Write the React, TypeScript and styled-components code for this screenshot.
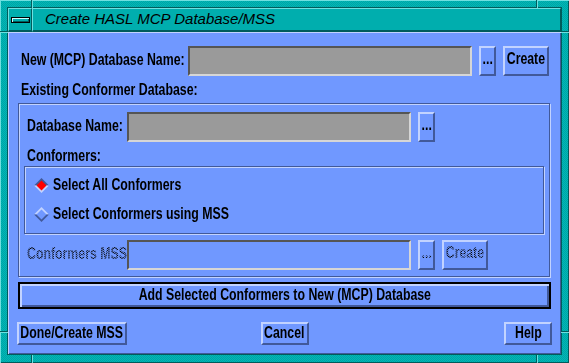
import React from 'react';
import styled, { createGlobalStyle, css } from 'styled-components';

const UI = `"Liberation Sans", Arial, sans-serif`;

const BLUE = '#7098ff';
const LIGHT = '#c2d3ff';
const DARK = '#41599a';
const TEAL = '#00aeae';
const TEAL_LIGHT = '#6ee0e0';
const TEAL_DARK = '#005c5c';

const Global = createGlobalStyle`
  html, body { margin: 0; padding: 0; width: 569px; height: 363px; overflow: hidden; background: ${TEAL}; }
  *, *::before, *::after { box-sizing: border-box; }
`;

const stipple = css`
  color: transparent;
  background-image: repeating-conic-gradient(#000 0% 25%, transparent 0% 50%);
  background-size: 2px 2px;
  -webkit-background-clip: text;
  background-clip: text;
`;

const Frame = styled.div`
  position: relative;
  width: 569px;
  height: 363px;
  padding: 8px 8px 9px 8px;
  display: flex;
  flex-direction: column;
  background-color: ${TEAL};
  background-image: repeating-conic-gradient(#00b8b8 0% 25%, #00a4a4 0% 50%);
  background-size: 2px 2px;
  box-shadow: inset 1px 1px 0 ${TEAL_LIGHT}, inset -1px -1px 0 ${TEAL_DARK};
`;

const Notch = styled.span<{ $x: number; $y: number; $v?: boolean }>`
  position: absolute;
  left: ${p => p.$x}px;
  top: ${p => p.$y}px;
  ${p =>
    p.$v
      ? css`
          width: 2px;
          height: 8px;
          border-left: 1px solid ${TEAL_DARK};
          border-right: 1px solid ${TEAL_LIGHT};
        `
      : css`
          width: 8px;
          height: 2px;
          border-top: 1px solid ${TEAL_DARK};
          border-bottom: 1px solid ${TEAL_LIGHT};
        `}
`;

const Window = styled.div`
  flex: 1;
  display: flex;
  flex-direction: column;
  box-shadow: 0 0 0 1px ${TEAL_DARK};
`;

const TitleBar = styled.div`
  flex: none;
  height: 24px;
  display: flex;
`;

const bevelTeal = css`
  background: ${TEAL};
  border-style: solid;
  border-width: 1px 1px 2px 1px;
  border-color: ${TEAL_LIGHT} ${TEAL_DARK} ${TEAL_DARK} ${TEAL_LIGHT};
`;

const MenuButton = styled.div`
  ${bevelTeal};
  width: 24px;
  height: 100%;
  display: flex;
  align-items: center;
  justify-content: center;
  padding-left: 1px;
`;

const MenuGlyph = styled.span`
  width: 19px;
  height: 6px;
  border: 1px solid #000;
  background: ${TEAL};
  box-shadow: inset 1px 1px 0 #c8ffff, inset -1px -1px 0 ${TEAL_DARK};
`;

const Title = styled.div`
  ${bevelTeal};
  flex: 1;
  height: 100%;
  display: flex;
  align-items: center;
  padding: 0 0 2px 12px;
  font: italic 15px "Liberation Sans", Arial, sans-serif;
  color: #000;
  white-space: nowrap;
`;

const Client = styled.div`
  flex: 1;
  display: flex;
  flex-direction: column;
  padding: 14px 10px 0 10px;
  background: ${BLUE};
  box-shadow: inset 1px 1px 0 ${LIGHT}, inset -1px -1px 0 ${DARK};
  font: bold 16px ${UI};
  color: #000;
`;

/* the dialog font is a narrow bold sans: Liberation Sans Bold squeezed horizontally */
const Narrow = styled.span<{ $origin?: 'left' | 'center'; $disabled?: boolean }>`
  display: inline-block;
  white-space: nowrap;
  transform: scaleX(0.77);
  transform-origin: ${p => p.$origin ?? 'left'} center;
  ${p => p.$disabled && stipple};
`;

const FieldRow = styled.div<{ $indent?: number; $top?: number }>`
  flex: none;
  display: flex;
  align-items: center;
  height: 30px;
  margin-top: ${p => p.$top ?? 0}px;
  padding-left: ${p => p.$indent ?? 0}px;
`;

const Label = styled.span<{ $width: number }>`
  flex: none;
  width: ${p => p.$width}px;
  padding-bottom: 3px;
  white-space: nowrap;
`;

const TextField = styled.div<{ $disabled?: boolean }>`
  flex: none;
  width: 284px;
  height: 30px;
  background: ${p => (p.$disabled ? BLUE : '#9a9a9a')};
  border-style: solid;
  border-width: 2px;
  border-color: #555555 #d6d6d6 #d6d6d6 #555555;
`;

const bevelBlue = css`
  background: ${BLUE};
  border-style: solid;
  border-width: 2px;
  border-color: ${LIGHT} ${DARK} ${DARK} ${LIGHT};
`;

const RowButton = styled.button<{ $width: number }>`
  ${bevelBlue};
  flex: none;
  width: ${p => p.$width}px;
  height: 30px;
  margin-left: 7px;
  padding: 0 0 4px 0;
  display: flex;
  align-items: center;
  justify-content: center;
  font: inherit;
  color: #000;
`;

const SectionLabel = styled.div<{ $indent?: number }>`
  flex: none;
  height: 20px;
  line-height: 20px;
  margin-top: 4px;
  padding-left: ${p => p.$indent ?? 0}px;
`;

const etched = css`
  border: 1px solid ${DARK};
  box-shadow: inset 1px 1px 0 ${LIGHT}, 1px 1px 0 ${LIGHT};
`;

const Group = styled.div`
  ${etched};
  flex: none;
  margin: 3px 1px 0 0;
  padding: 8px 8px 6px 8px;
  display: flex;
  flex-direction: column;
`;

const RadioBox = styled.div`
  ${etched};
  margin: 0 -3px;
  padding: 8px 9px 9px 9px;
  display: flex;
  flex-direction: column;
  gap: 9px;
`;

const RadioRow = styled.div`
  height: 20px;
  display: flex;
  align-items: center;
  gap: 4px;
`;

const DefaultButton = styled.button`
  flex: none;
  height: 27px;
  margin-top: 5px;
  padding: 0 0 2px 0;
  background: ${BLUE};
  border: 2px solid #000;
  box-shadow: inset 2px 2px 0 ${LIGHT}, inset -2px -2px 0 ${DARK};
  font: inherit;
  color: #000;
  display: flex;
  align-items: center;
  justify-content: center;
`;

const ActionRow = styled.div`
  flex: none;
  display: grid;
  grid-template-columns: 1fr auto 1fr;
  margin: 13px -1px 0 -1px;
`;

const ActionButton = styled.button<{ $width: number; $align: 'start' | 'center' | 'end' }>`
  ${bevelBlue};
  justify-self: ${p => p.$align};
  width: ${p => p.$width}px;
  height: 23px;
  padding: 0 0 2px 0;
  display: flex;
  align-items: center;
  justify-content: center;
  font: inherit;
  color: #000;
`;

const Diamond: React.FC<{ selected?: boolean }> = ({ selected }) => (
  <svg width="15" height="15" viewBox="0 0 15 15" style={{ flex: 'none' }}>
    <polygon points="0,7.5 7.5,0 15,7.5" fill={selected ? DARK : LIGHT} />
    <polygon points="0,7.5 7.5,15 15,7.5" fill={selected ? LIGHT : DARK} />
    <polygon points="2.5,7.5 7.5,2.5 12.5,7.5 7.5,12.5" fill={selected ? '#ff0000' : BLUE} />
  </svg>
);

export default function App() {
  return (
    <>
      <Global />
      <Frame>
        <Notch $v $x={31} $y={0} />
        <Notch $v $x={536} $y={0} />
        <Notch $v $x={31} $y={355} />
        <Notch $v $x={536} $y={355} />
        <Notch $x={0} $y={31} />
        <Notch $x={0} $y={331} />
        <Notch $x={561} $y={31} />
        <Notch $x={561} $y={331} />
        <Window>
          <TitleBar>
            <MenuButton>
              <MenuGlyph />
            </MenuButton>
            <Title>Create HASL MCP Database/MSS</Title>
          </TitleBar>
          <Client>
            <FieldRow $indent={3}>
              <Label $width={167}>
                <Narrow>New (MCP) Database Name:</Narrow>
              </Label>
              <TextField />
              <RowButton $width={17}>
                <Narrow $origin="center">...</Narrow>
              </RowButton>
              <RowButton $width={46}>
                <Narrow $origin="center">Create</Narrow>
              </RowButton>
            </FieldRow>
            <SectionLabel $indent={3}>
              <Narrow>Existing Conformer Database:</Narrow>
            </SectionLabel>
            <Group>
              <FieldRow>
                <Label $width={100}>
                  <Narrow>Database Name:</Narrow>
                </Label>
                <TextField />
                <RowButton $width={17}>
                  <Narrow $origin="center">...</Narrow>
                </RowButton>
              </FieldRow>
              <SectionLabel>
                <Narrow>Conformers:</Narrow>
              </SectionLabel>
              <RadioBox>
                <RadioRow>
                  <Diamond selected />
                  <Narrow>Select All Conformers</Narrow>
                </RadioRow>
                <RadioRow>
                  <Diamond />
                  <Narrow>Select Conformers using MSS</Narrow>
                </RadioRow>
              </RadioBox>
              <FieldRow $top={6}>
                <Label $width={100}>
                  <Narrow $disabled>Conformers MSS</Narrow>
                </Label>
                <TextField $disabled />
                <RowButton $width={17}>
                  <Narrow $origin="center" $disabled>...</Narrow>
                </RowButton>
                <RowButton $width={46}>
                  <Narrow $origin="center" $disabled>Create</Narrow>
                </RowButton>
              </FieldRow>
            </Group>
            <DefaultButton>
              <Narrow $origin="center">Add Selected Conformers to New (MCP) Database</Narrow>
            </DefaultButton>
            <ActionRow>
              <ActionButton $width={110} $align="start">
                <Narrow $origin="center">Done/Create MSS</Narrow>
              </ActionButton>
              <ActionButton $width={48} $align="center">
                <Narrow $origin="center">Cancel</Narrow>
              </ActionButton>
              <ActionButton $width={48} $align="end">
                <Narrow $origin="center">Help</Narrow>
              </ActionButton>
            </ActionRow>
          </Client>
        </Window>
      </Frame>
    </>
  );
}
